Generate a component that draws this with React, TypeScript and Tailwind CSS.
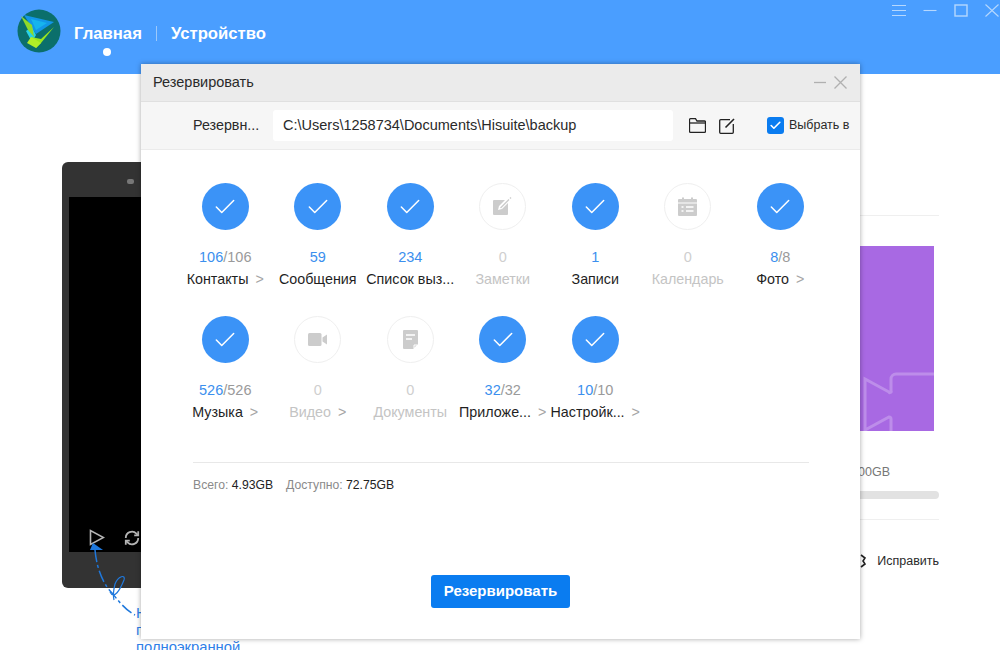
import { Check } from "lucide-react";

type Item = {
  label: string;
  done?: string;
  total?: string;
  arrow?: boolean;
  icon?: "note" | "calendar" | "video" | "doc";
};

const items: Item[] = [
  { label: "Контакты", done: "106", total: "106", arrow: true },
  { label: "Сообщения", done: "59" },
  { label: "Список выз...", done: "234" },
  { label: "Заметки", icon: "note" },
  { label: "Записи", done: "1" },
  { label: "Календарь", icon: "calendar" },
  { label: "Фото", done: "8", total: "8", arrow: true },
  { label: "Музыка", done: "526", total: "526", arrow: true },
  { label: "Видео", icon: "video", arrow: true },
  { label: "Документы", icon: "doc" },
  { label: "Приложе...", done: "32", total: "32", arrow: true },
  { label: "Настройк...", done: "10", total: "10", arrow: true },
];

const Logo = () => (
  <svg width="44" height="44" viewBox="0 0 44 44">
    <circle cx="22" cy="22" r="21.500" fill="#0b6f6b" />
    <polygon points="7,6 37,13 19,25" fill="#1296e8" />
    <polygon points="14,10 30,14 19,21" fill="#16b4ee" />
    <polygon points="9,22 15,18 19,26 15,33" fill="#27d3e8" />
    <polygon points="4,7 15,16 17,28 11,21" fill="#8fd92a" />
    <polygon points="37,18 24,34 19,39 14,28 24,30" fill="#9ae61f" />
    <polygon points="14,28 24,34 19,39 10,34" fill="#b2ee28" />
  </svg>
);

const GrayIcon = ({ icon }: { icon: NonNullable<Item["icon"]> }) => {
  if (icon === "note") {
    return (
      <svg width="19" height="19" viewBox="0 0 19 19">
        <path d="M1 3h11l-6 6-1 4 4-1 6-6v11a1 1 0 0 1-1 1H1a1 1 0 0 1-1-1V4a1 1 0 0 1 1-1z" fill="#cccccc" />
        <path d="M7.500 11L16 2.500M17 0.500l1 1" stroke="#cccccc" strokeWidth="1.400" />
      </svg>
    );
  }
  if (icon === "calendar") {
    return (
      <svg width="19" height="19" viewBox="0 0 19 19">
        <path d="M4 2V0.500h2V2h7V0.500h2V2h3a1 1 0 0 1 1 1v2.500H0V3a1 1 0 0 1 1-1z" fill="#cccccc" />
        <path d="M0 6.500h19V18a1 1 0 0 1-1 1H1a1 1 0 0 1-1-1z" fill="#cccccc" />
        <path d="M3.500 10h2M8 10h7.500M3.500 14h2M8 14h7.500" stroke="#ffffff" strokeWidth="1.600" />
      </svg>
    );
  }
  if (icon === "video") {
    return (
      <svg width="19" height="13" viewBox="0 0 19 13">
        <rect width="13.500" height="13" rx="1.500" fill="#cccccc" />
        <polygon points="14.500,4.500 19,1.500 19,11.500 14.500,8.500" fill="#cccccc" />
      </svg>
    );
  }
  return (
    <svg width="15" height="19" viewBox="0 0 15 19">
      <path d="M1 0h13a1 1 0 0 1 1 1v13l-5 5H1a1 1 0 0 1-1-1V1a1 1 0 0 1 1-1z" fill="#cccccc" />
      <path d="M3 5h9M3 9h6" stroke="#ffffff" strokeWidth="1.500" />
      <path d="M11 18v-3h3" stroke="#ffffff" strokeWidth="1" fill="none" />
    </svg>
  );
};

const BackupItem = ({ item }: { item: Item }) => {
  const active = !item.icon;
  return (
    <div className="flex flex-col items-center">
      {active ? (
        <div className="flex h-[47px] w-[47px] items-center justify-center rounded-full bg-[#3b93f7]">
          <Check className="h-[26px] w-[26px] text-white" strokeWidth={1.4} />
        </div>
      ) : (
        <div className="flex h-[47px] w-[47px] items-center justify-center rounded-full border border-[#efefef]">
          <GrayIcon icon={item.icon!} />
        </div>
      )}
      <div className="mt-[19px] h-[16px] text-[14.500px] leading-[16px]">
        {active ? (
          <>
            <span className="text-[#3b8fee]">{item.done}</span>
            {item.total && <span className="text-[#9a9a9a]">/{item.total}</span>}
          </>
        ) : (
          <span className="text-[#cfcfcf]">0</span>
        )}
      </div>
      <div
        className={`mt-[6px] flex h-[17px] items-center whitespace-nowrap text-[14.300px] leading-[17px] ${
          active ? "text-[#1f1f1f]" : "text-[#c4c4c4]"
        }`}
      >
        <span>{item.label}</span>
        {item.arrow && <span className="ml-[7px] text-[#a5a5a5]">&gt;</span>}
      </div>
    </div>
  );
};

const BackupModal = () => (
  <div className="absolute left-[141px] top-[64px] flex h-[575px] w-[719px] flex-col bg-white shadow-[0_0_5px_rgba(0,0,0,0.35)]">
    <div className="flex h-[38px] items-center justify-between border-b border-[#e0e0e0] bg-[#ebebeb] pl-[12px] pr-[13px]">
      <span className="text-[14.500px] text-[#2a2a2a]">Резервировать</span>
      <div className="flex items-center gap-[8px]">
        <svg width="12" height="13" viewBox="0 0 12 13" stroke="#b0b0b0" strokeWidth="1.300">
          <path d="M0 6.500h12" />
        </svg>
        <svg width="13" height="13" viewBox="0 0 13 13" stroke="#b0b0b0" strokeWidth="1.300">
          <path d="M0.500 0.500l12 12M12.500 0.500l-12 12" />
        </svg>
      </div>
    </div>

    <div className="flex h-[48px] items-center border-b border-[#ebebeb] bg-[#f6f6f6]">
      <span className="ml-[52px] w-[80px] text-[14.300px] text-[#2a2a2a]">Резервн...</span>
      <div className="flex h-[31px] w-[400px] items-center rounded-[3px] bg-white pl-[10px] text-[14.500px] text-[#2a2a2a]">
        C:\Users\1258734\Documents\Hisuite\backup
      </div>
      <svg className="ml-[16px]" width="17" height="15" viewBox="0 0 17 15" fill="none" stroke="#222222" strokeWidth="1.300">
        <path d="M1.500 0.700h5l1.500 2.300h7.500a1 1 0 0 1 1 1v9.300a1 1 0 0 1-1 1h-14a1 1 0 0 1-1-1V1.700a1 1 0 0 1 1-1z" />
        <path d="M0.700 5h15.600" />
      </svg>
      <svg className="ml-[13px]" width="16" height="16" viewBox="0 0 16 16" fill="none" stroke="#222222" strokeWidth="1.300">
        <path d="M11 1.700H1.700a1 1 0 0 0-1 1v11.600a1 1 0 0 0 1 1h11.600a1 1 0 0 0 1-1V6" />
        <path d="M6.500 9.500L15 1" strokeWidth="1.600" />
      </svg>
      <div className="ml-[32px] flex h-[17px] w-[17px] items-center justify-center rounded-[3px] bg-[#0a7cf0]">
        <Check className="h-[13px] w-[13px] text-white" strokeWidth={3} />
      </div>
      <span className="ml-[5px] whitespace-nowrap text-[12.500px] text-[#2a2a2a]">Выбрать в</span>
    </div>

    <div className="ml-[38px] mt-[33px] grid w-[647.500px] grid-cols-7 gap-y-[86px]">
      {items.map((item) => (
        <div key={item.label} className="h-[47px]">
          <BackupItem item={item} />
        </div>
      ))}
    </div>

    <div className="mx-[52px] mt-[99px] w-[616px] border-t border-[#e8e8e8] pt-[14px] text-[12.200px] leading-[16px]">
      <span className="text-[#8a8a8a]">Всего: </span>
      <span className="text-[#222222]">4.93GB</span>
      <span className="ml-[13px] text-[#8a8a8a]">Доступно: </span>
      <span className="text-[#222222]">72.75GB</span>
    </div>

    <div className="mt-[82px] flex justify-center">
      <button className="h-[33px] w-[139px] rounded-[3px] bg-[#0a7cf0] text-[15px] font-bold text-white">
        Резервировать
      </button>
    </div>
  </div>
);

const App = () => (
  <div className="h-[671px] w-full overflow-hidden bg-white font-['Liberation_Sans',Arial,sans-serif]">
    <div className="relative h-[650px] overflow-hidden">
      <header className="relative h-[74px] bg-[#4a9eff]">
        <div className="flex items-center pl-[17px] pt-[9px]">
          <Logo />
          <div className="ml-[13px] mt-[6px] flex items-center text-[16.700px] font-bold text-white">
            <div className="relative">
              Главная
              <span className="absolute left-[29px] top-[27px] h-[8px] w-[8px] rounded-full bg-white" />
            </div>
            <span className="ml-[14px] mr-[14px] h-[15px] w-px bg-[#9cc9fb]" />
            <span>Устройство</span>
          </div>
        </div>
        <div className="absolute right-[1px] top-[4px] flex h-[13px] items-center gap-[17px]">
          <svg width="14" height="13" viewBox="0 0 14 13" stroke="#b6d8fe" strokeWidth="1.100">
            <path d="M0 1.500h14M0 6.500h14M0 11.500h14" />
          </svg>
          <svg width="14" height="13" viewBox="0 0 14 13" stroke="#b6d8fe" strokeWidth="1.100">
            <path d="M0.500 6.500h13" />
          </svg>
          <svg width="14" height="13" viewBox="0 0 14 13" fill="none" stroke="#b6d8fe" strokeWidth="1.400">
            <rect x="1" y="1" width="12" height="11" />
          </svg>
          <svg width="14" height="13" viewBox="0 0 14 13" stroke="#b6d8fe" strokeWidth="1.100">
            <path d="M0.500 0.500l13 12M13.500 0.500l-13 12" />
          </svg>
        </div>
      </header>

      <main className="flex justify-between pl-[62px] pr-[61px] pt-[88px]">
        <div>
          <div className="flex h-[426px] w-[300px] flex-col rounded-[6px] bg-[#333333] pl-[7px]">
            <div className="relative h-[35px]">
              <span className="absolute left-[58px] top-[17px] h-[5px] w-[7px] rounded-[2px] bg-[#777777]" />
            </div>
            <div className="flex h-[355px] items-end gap-[19px] bg-black pb-[6px] pl-[20px]">
              <svg width="16" height="17" viewBox="0 0 16 17">
                <path d="M1.500 1.500v14l13-7z" fill="none" stroke="#b5b5b5" strokeWidth="1.600" />
              </svg>
              <svg width="16" height="16" viewBox="0 0 18 18" fill="none" stroke="#b5b5b5" strokeWidth="2">
                <path d="M2 9a7 7 0 0 1 12-5l1.500 1.500M16 9a7 7 0 0 1-12 5l-1.500-1.500" />
                <path d="M16 1.500v4.500h-4.500M2 16.500V12h4.500" />
              </svg>
            </div>
          </div>
          <div className="ml-[74px] mt-[17px] w-[130px] text-[14.800px] leading-[17px] text-[#2f80e8]">
            <div>Н</div>
            <div>п</div>
            <div>полноэкранной</div>
          </div>
        </div>

        <div className="flex w-[340px] flex-col text-[12.500px]">
          <div className="mt-[53px] border-t border-[#efefef]" />
          <div className="mt-[30px] h-[185px] w-[335px] overflow-hidden bg-[#a869e3]">
            <svg width="335" height="185" viewBox="0 0 335 185">
              <path
                d="M335 128H297a5 5 0 0 0-5 5v12a1 1 0 0 1-2 1L266 133v52M266 184l24-13a2 2 0 0 1 2 2v12"
                fill="none"
                stroke="#bd8dea"
                strokeWidth="3"
              />
            </svg>
          </div>
          <div className="mt-[33px] pl-[259px] text-[12.500px] leading-[16px] text-[#777777]">00GB</div>
          <div className="mt-[11px] h-[8px] rounded-full bg-[#e2e2e2]" />
          <div className="mt-[20px] border-t border-[#efefef]" />
          <div className="mt-[32px] flex items-center justify-end gap-[9px] text-[#2a2a2a]">
            <svg width="8" height="14" viewBox="0 0 8 14" fill="none" stroke="#222222" strokeWidth="1.600">
              <path d="M1 1l4 3-2 3 2 3-4 3" />
            </svg>
            <span>Исправить</span>
          </div>
        </div>
      </main>

      <svg className="absolute left-[90px] top-[540px]" width="60" height="80" viewBox="0 0 60 80" fill="none">
        <path d="M3 3L0 10h13z" fill="#1f78dc" />
        <path
          d="M5 10c2 22 10 36 17 43 5 6 13 17 23 22"
          stroke="#1f78dc"
          strokeWidth="1.500"
          strokeDasharray="12 3 3 3"
        />
        <path d="M20 52c4 8 10-2 14-12 2-6-6-4-9 4-2 8-2 12-1 16" stroke="#1f78dc" strokeWidth="1.200" />
      </svg>

      <BackupModal />
    </div>
  </div>
);

export default App;
